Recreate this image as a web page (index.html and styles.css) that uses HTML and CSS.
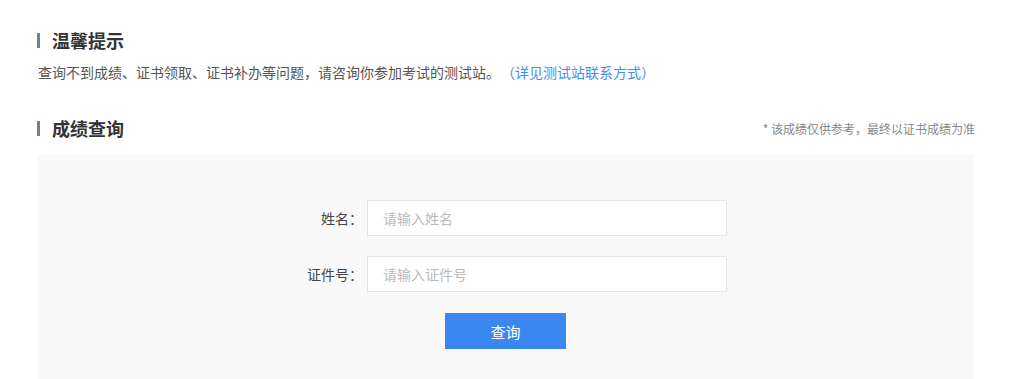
FILE: index.html
```html
<!DOCTYPE html>
<html lang="zh-CN">
<head>
  <meta charset="UTF-8">
  <title>成绩查询</title>
  <link rel="stylesheet" href="styles.css">
</head>
<body>

  <div class="wrap">
    <h2 class="section-title">温馨提示</h2>
    <p class="tip-text">查询不到成绩、证书领取、证书补办等问题，请咨询你参加考试的测试站。<a class="tip-link" href="#">（详见测试站联系方式）</a></p>

    <div class="section-head">
      <h2 class="section-title">成绩查询</h2>
      <span class="note">* 该成绩仅供参考，最终以证书成绩为准</span>
    </div>

    <div class="query-box">
      <form class="query-form" onsubmit="return false">
        <div class="form-row">
          <label class="form-label" for="name">姓名：</label>
          <input class="form-input" id="name" type="text" placeholder="请输入姓名">
        </div>
        <div class="form-row">
          <label class="form-label" for="idno">证件号：</label>
          <input class="form-input" id="idno" type="text" placeholder="请输入证件号">
        </div>
        <button class="query-btn" type="submit">查询</button>
      </form>
    </div>
  </div>

</body>
</html>
```

FILE: styles.css
```css
body {
  margin: 0;
  background: #fff;
  font-family: "Noto Sans CJK SC", "Liberation Sans", sans-serif;
  color: #333;
}

.wrap {
  width: 937px;
  padding: 28px 0 0 37px;
}

.section-title {
  margin: 0;
  font-size: 18px;
  line-height: 24px;
  height: 24px;
  font-weight: bold;
  color: #333;
  display: flex;
  align-items: center;
}

.section-title::before {
  content: "";
  display: inline-block;
  width: 3px;
  height: 15px;
  margin-right: 12px;
  background: #6e7fa3;
}

.tip-text {
  margin: 10px 0 0 1px;
  font-size: 14px;
  line-height: 20px;
  color: #555;
}

.tip-link {
  color: #3e8ef7;
  text-decoration: none;
  margin-left: 8px;
}

.section-head {
  margin-top: 34px;
  display: flex;
  justify-content: space-between;
  align-items: center;
}

.note {
  font-size: 12px;
  color: #888;
  margin-right: -1px;
}

.query-box {
  margin-top: 15px;
  background: #f9f9f9;
  padding: 45px 0 45px;
}

.query-form {
  display: flex;
  flex-direction: column;
  align-items: center;
  gap: 20px;
}

.form-row {
  display: flex;
  align-items: center;
  margin-left: 3px;
}

.form-label {
  width: 76px;
  padding-right: 4px;
  text-align: right;
  font-size: 14px;
  color: #444;
}

.form-input {
  box-sizing: border-box;
  width: 360px;
  height: 36px;
  padding: 0 15px;
  border: 1px solid #e4e4e4;
  background: #fff;
  font-family: inherit;
  font-size: 14px;
  color: #333;
  outline: none;
}

.form-input::placeholder {
  color: #bbb;
}

.query-btn {
  width: 121px;
  height: 36px;
  margin-top: 1px;
  border: none;
  background: #3b87f0;
  color: #fff;
  font-family: inherit;
  font-size: 15px;
  cursor: pointer;
}
```
